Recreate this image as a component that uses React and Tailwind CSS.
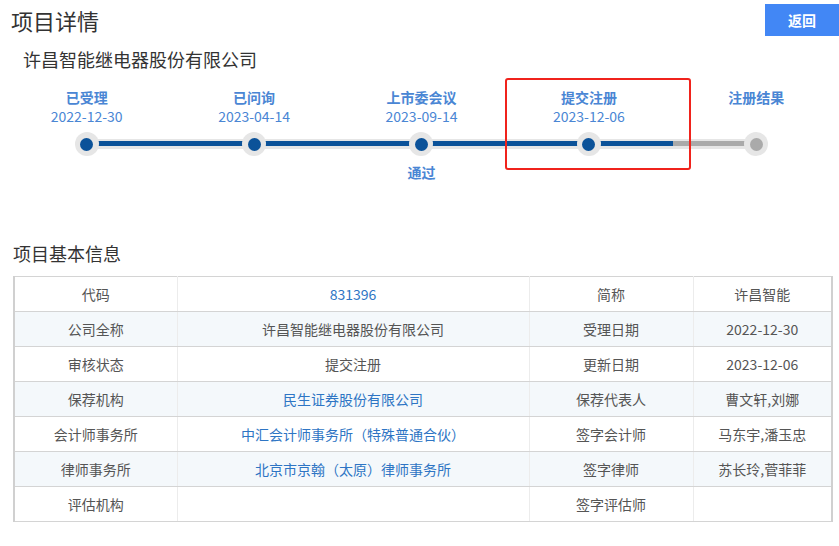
import React from "react";

const FONT = { fontFamily: '"Noto Sans CJK SC", "Noto Sans", sans-serif' };

const steps = [
  { t: "已受理", d: "2022-12-30", done: true },
  { t: "已问询", d: "2023-04-14", done: true },
  { t: "上市委会议", d: "2023-09-14", done: true, sub: "通过" },
  { t: "提交注册", d: "2023-12-06", done: true },
  { t: "注册结果", d: "", done: false },
];

const rows = [
  ["代码", { v: "831396", link: true }, "简称", { v: "许昌智能" }],
  ["公司全称", { v: "许昌智能继电器股份有限公司" }, "受理日期", { v: "2022-12-30" }],
  ["审核状态", { v: "提交注册" }, "更新日期", { v: "2023-12-06" }],
  ["保荐机构", { v: "民生证券股份有限公司", link: true }, "保荐代表人", { v: "曹文轩,刘娜" }],
  ["会计师事务所", { v: "中汇会计师事务所（特殊普通合伙）", link: true }, "签字会计师", { v: "马东宇,潘玉忠" }],
  ["律师事务所", { v: "北京市京翰（太原）律师事务所", link: true }, "签字律师", { v: "苏长玲,菅菲菲" }],
  ["评估机构", { v: "" }, "签字评估师", { v: "" }],
];

export default function App() {
  return (
    <div className="w-[839px] h-[546px] bg-white overflow-hidden relative" style={FONT}>
      {/* header */}
      <div className="flex items-center justify-between pt-[4px] h-[36px]">
        <div className="pl-[11px] text-[22px] leading-[32px] text-[#333]">项目详情</div>
        <button className="w-[74px] h-[32px] bg-[#4287f5] text-white text-[14px] font-bold flex items-center justify-center">
          返回
        </button>
      </div>

      {/* company */}
      <div className="mt-[11px] pl-[23px] text-[18px] leading-[24px] text-[#333]">许昌智能继电器股份有限公司</div>

      {/* timeline */}
      <div className="relative ml-[3px] w-[837px] h-[115px]">
        {/* track */}
        <div className="absolute left-[84px] top-[68px] w-[670px] h-[10px] bg-[#e6e6e6] rounded-full" />
        <div className="absolute left-[84px] top-[70px] w-[586px] h-[5px] bg-[#0b5299]" />
        <div className="absolute left-[670px] top-[70px] w-[84px] h-[5px] bg-[#aaaaaa]" />
        <div className="grid grid-cols-5 relative">
          {steps.map((s, i) => (
            <div key={i} className="flex flex-col items-center pt-[17px]">
              <div className="text-[14px] leading-[18px] font-bold text-[#4a86d4]">{s.t}</div>
              <div className="text-[14px] leading-[18px] mt-[1px] text-[#4a86d4] h-[18px]">{s.d}</div>
              <div className="mt-[7px] w-[24px] h-[24px] rounded-full bg-[#e6e6e6] flex items-center justify-center">
                <div className={`w-[13px] h-[13px] rounded-full ${s.done ? "bg-[#0b5299]" : "bg-[#aaaaaa]"}`} />
              </div>
              {s.sub && (
                <div className="mt-[7px] text-[14px] leading-[18px] font-bold text-[#4a86d4]">{s.sub}</div>
              )}
            </div>
          ))}
        </div>
        {/* highlight box */}
        <div className="absolute left-[502px] top-[7px] w-[186px] h-[92px] border-2 border-[#f0231c] rounded-[3px]" />
      </div>

      {/* basic info */}
      <div className="mt-[55px] pl-[13px] text-[18px] leading-[24px] text-[#333]">项目基本信息</div>

      <table className="ml-[13px] mt-[11px] w-[818px] border-collapse text-[14px] table-fixed">
        <colgroup>
          <col className="w-[163px]" />
          <col className="w-[352px]" />
          <col className="w-[164px]" />
          <col className="w-[139px]" />
        </colgroup>
        <tbody>
          {rows.map((r, i) => (
            <tr key={i} className={`h-[35px] ${i % 2 === 1 ? "bg-[#f4f8fb]" : "bg-white"}`}>
              <td className="border-y border-y-[#d4d4d4] border-l-2 border-l-[#d0d0d0] border-r border-r-[#ececec] text-center text-[#555] p-0">
                {r[0]}
              </td>
              <td className={`border-y border-y-[#d4d4d4] border-r border-r-[#ececec] text-center p-0 ${r[1].link ? "text-[#2e75c4]" : "text-[#555]"}`}>
                {r[1].v}
              </td>
              <td className="border-y border-y-[#d4d4d4] border-r border-r-[#ececec] text-center text-[#555] p-0">
                {r[2]}
              </td>
              <td className="border-y border-y-[#d4d4d4] border-r-2 border-r-[#d0d0d0] text-center text-[#555] p-0">
                {r[3].v}
              </td>
            </tr>
          ))}
        </tbody>
      </table>
    </div>
  );
}
